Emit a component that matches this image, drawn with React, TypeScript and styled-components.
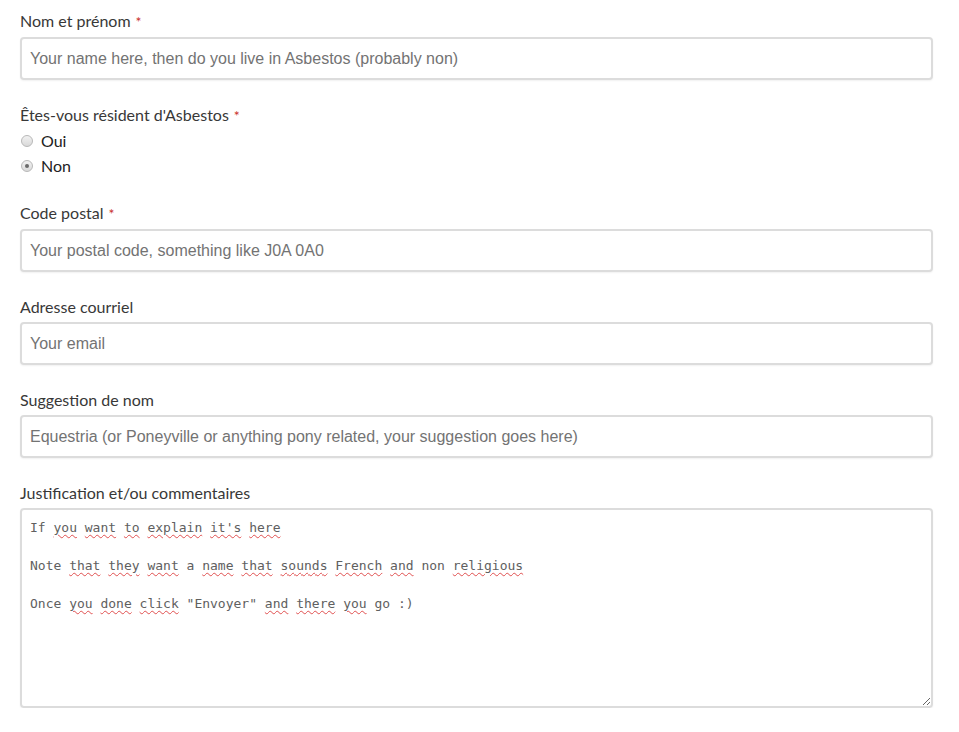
import React from "react";
import styled, { createGlobalStyle } from "styled-components";

const Global = createGlobalStyle`
  html, body { margin: 0; padding: 0; background: #fff; }
  body { font-family: Lato, "Open Sans", sans-serif; }
`;

const Form = styled.form`
  display: flex;
  flex-direction: column;
  gap: 24px;
  width: 913px;
  padding: 10px 0 0 20px;
`;

const Field = styled.div`
  display: flex;
  flex-direction: column;
  gap: 5px;
`;

const Label = styled.label`
  font-family: Lato, "Open Sans", sans-serif;
  font-size: 16px;
  line-height: 21px;
  color: #383838;
`;

const Req = styled.span`
  color: #c9302c;
  margin-left: 5px;
  font-size: 14px;
`;

const Input = styled.input`
  box-sizing: border-box;
  width: 100%;
  height: 43px;
  border: 2px solid #dcdcdc;
  border-radius: 4px;
  box-shadow: 0 1px 2px rgba(0, 0, 0, 0.06);
  padding: 0 8px;
  font-family: "Liberation Sans", Arial, sans-serif;
  font-size: 16px;
  color: #333;
  outline: none;
  &::placeholder { color: #737373; }
`;

const RadioList = styled.div`
  display: flex;
  flex-direction: column;
  margin-top: -3px;
`;

const RadioRow = styled.label`
  display: flex;
  align-items: center;
  height: 25px;
  font-family: Lato, "Open Sans", sans-serif;
  font-size: 16px;
  color: #222;
  gap: 8px;
`;

const Radio = styled.input`
  appearance: none;
  margin: 0 0 0 1px;
  width: 12px;
  height: 12px;
  border-radius: 50%;
  border: 1px solid #b8b8b8;
  background: linear-gradient(#f2f2f2, #d9d9d9);
  display: grid;
  place-items: center;
  &:checked::after {
    content: "";
    width: 4px;
    height: 4px;
    border-radius: 50%;
    background: #6a6a6a;
  }
`;

const TextBox = styled.div`
  box-sizing: border-box;
  width: 100%;
  height: 200px;
  border: 2px solid #dcdcdc;
  border-radius: 4px;
  box-shadow: 0 1px 2px rgba(0, 0, 0, 0.06);
  padding: 8px 8px;
  font-family: "DejaVu Sans Mono", monospace;
  font-size: 13px;
  line-height: 19px;
  color: #606060;
  white-space: pre-wrap;
  overflow: auto;
  resize: vertical;
`;

const Typo = styled.span`
  text-decoration: underline wavy #e05050;
  text-decoration-thickness: 1px;
  text-underline-offset: 2px;
`;

const lines: string[] = [
  "If ~you ~want ~to ~explain ~it's ~here",
  "",
  "Note ~that ~they ~want a ~name ~that ~sounds ~French ~and non ~religious",
  "",
  'Once ~you ~done ~click "Envoyer" ~and ~there ~you go :)',
];

function renderLine(line: string, i: number) {
  const words = line.split(" ");
  return (
    <div key={i}>
      {line === "" ? "\u00a0" : words.map((w, j) => (
        <React.Fragment key={j}>
          {j > 0 ? " " : ""}
          {w.startsWith("~") ? <Typo>{w.slice(1)}</Typo> : w}
        </React.Fragment>
      ))}
    </div>
  );
}

export default function App() {
  return (
    <>
      <Global />
      <Form>
        <Field>
          <Label>Nom et prénom<Req>*</Req></Label>
          <Input placeholder="Your name here, then do you live in Asbestos (probably non)" />
        </Field>
        <Field>
          <Label>Êtes-vous résident d'Asbestos<Req>*</Req></Label>
          <RadioList>
            <RadioRow><Radio type="radio" name="res" />Oui</RadioRow>
            <RadioRow><Radio type="radio" name="res" defaultChecked />Non</RadioRow>
          </RadioList>
        </Field>
        <Field>
          <Label>Code postal<Req>*</Req></Label>
          <Input placeholder="Your postal code, something like J0A 0A0" />
        </Field>
        <Field>
          <Label>Adresse courriel</Label>
          <Input placeholder="Your email" />
        </Field>
        <Field>
          <Label>Suggestion de nom</Label>
          <Input placeholder="Equestria (or Poneyville or anything pony related, your suggestion goes here)" />
        </Field>
        <Field>
          <Label>Justification et/ou commentaires</Label>
          <TextBox role="textbox">{lines.map(renderLine)}</TextBox>
        </Field>
      </Form>
    </>
  );
}
